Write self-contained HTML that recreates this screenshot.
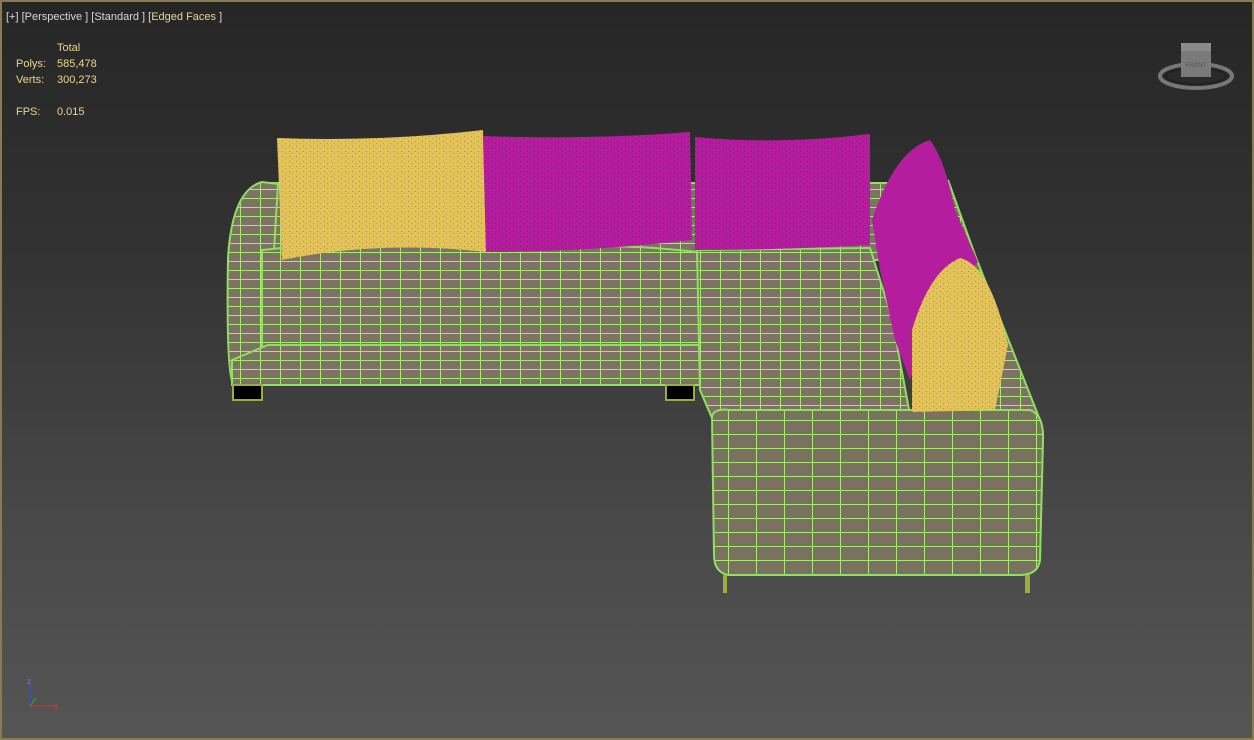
<!DOCTYPE html>
<html><head><meta charset="utf-8"><style>
html,body{margin:0;padding:0}
body{width:1254px;height:740px;overflow:hidden;background:#8a7b4c;font-family:"Liberation Sans",sans-serif}
#vp{position:absolute;left:2px;top:2px;width:1250px;height:736px;background:linear-gradient(#262626 0%,#333 35%,#484848 70%,#555 100%)}
.t{position:absolute;font-size:11px;color:#d8d8d8;white-space:pre}
.y{color:#e8d890}
</style></head><body>
<div id="vp"></div>
<div class="t" style="left:6px;top:11px">[+] [Perspective ] [Standard ] [<span class="y">Edged Faces</span> ]</div>
<div class="t y" style="left:57px;top:42px">Total</div>
<div class="t y" style="left:16px;top:58px">Polys:</div><div class="t y" style="left:57px;top:58px">585,478</div>
<div class="t y" style="left:16px;top:74px">Verts:</div><div class="t y" style="left:57px;top:74px">300,273</div>
<div class="t y" style="left:16px;top:106px">FPS:</div><div class="t y" style="left:57px;top:106px">0.015</div>
<svg width="1254" height="740" style="position:absolute;left:0;top:0">
<defs>
<pattern id="g" width="20" height="9" patternUnits="userSpaceOnUse">
<rect width="20" height="9" fill="#7d7263"/>
<path d="M0 0.5H20M0.5 0V9" stroke="#a8e874" stroke-width="1"/>
</pattern>
<pattern id="g2" width="28" height="14" patternUnits="userSpaceOnUse">
<rect width="28" height="14" fill="#7b7161"/>
<path d="M0 0.5H28M0.5 0V14" stroke="#a8e874" stroke-width="1"/>
</pattern>
<pattern id="sp" width="7" height="5" patternUnits="userSpaceOnUse">
<rect x="2" y="1" width="1" height="1" fill="#000" opacity="0.25"/>
<rect x="5" y="3" width="1" height="1" fill="#000" opacity="0.2"/>
</pattern>
</defs>
<g stroke="#8fe060" stroke-width="2">
<path d="M262 183H948L975 260L700 260L262 260Z" fill="url(#g)"/>
<path d="M228 258Q232 190 262 182L278 184L268 350L234 385Q226 380 228 258Z" fill="url(#g)"/>
<path d="M262 250Q370 238 480 250Q590 240 697 252L700 348L262 348Z" fill="url(#g)"/>
<path d="M232 360L268 345L700 345L700 385L232 385Z" fill="url(#g)"/>
<path d="M697 250L870 248L892 318L910 415L712 418L700 390Z" fill="url(#g)"/>
<path d="M948 180L975 255L1040 420L1010 430L960 420Z" fill="url(#g)"/>
<path d="M712 418Q712 408 730 410L1030 410Q1044 415 1043 440L1040 560Q1038 575 1020 575L728 575Q714 572 714 555Z" fill="url(#g2)"/>
</g>
<g>
<path d="M277 138Q380 142 483 130L486 252Q380 240 282 260Z" fill="#e3c25a"/>
<path d="M483 136Q590 140 690 132L692 240Q590 252 486 252Z" fill="#b41e9e"/>
<path d="M695 137Q780 145 870 134L870 245Q780 250 695 250Z" fill="#b41e9e"/>
<path d="M872 220Q895 150 930 140Q945 160 955 210L978 262L940 300L910 380L895 340L880 270Z" fill="#b41e9e"/>
<path d="M912 330Q930 270 960 258Q990 265 1008 345L995 410L912 412Z" fill="#e3c25a"/>
</g>
<g fill="url(#sp)">
<path d="M277 138Q380 142 483 130L486 252Q380 240 282 260Z"/>
<path d="M483 136Q590 140 690 132L692 240Q590 252 486 252Z"/>
<path d="M695 137Q780 145 870 134L870 245Q780 250 695 250Z"/>
<path d="M912 330Q930 270 960 258Q990 265 1008 345L995 410L912 412Z"/>
</g>
<rect x="233" y="385" width="29" height="15" fill="#000" stroke="#9aae40" stroke-width="2"/>
<rect x="666" y="385" width="28" height="15" fill="#000" stroke="#9aae40" stroke-width="2"/>
<rect x="723" y="575" width="4" height="18" fill="#9aae40"/>
<rect x="1025" y="575" width="5" height="18" fill="#9aae40"/>
<ellipse cx="1196" cy="76" rx="36" ry="12" fill="none" stroke="#777" stroke-width="4"/>
<ellipse cx="1196" cy="76" rx="30" ry="8" fill="none" stroke="#222" stroke-width="2"/>
<rect x="1181" y="43" width="30" height="34" fill="#7a7a7a"/>
<rect x="1181" y="43" width="30" height="8" fill="#8a8a8a"/>
<text x="1196" y="67" font-size="6" fill="#555" text-anchor="middle" font-family="Liberation Sans">FRONT</text>
<path d="M30 706V684" stroke="#3050e0"/><path d="M30 706H55" stroke="#d03030"/><path d="M30 706L36 698" stroke="#30b030"/>
<text x="27" y="684" font-size="8" fill="#6080ff" font-family="Liberation Sans">z</text>
<text x="54" y="709" font-size="8" fill="#e04040" font-family="Liberation Sans">x</text>
</svg>
</body></html>
